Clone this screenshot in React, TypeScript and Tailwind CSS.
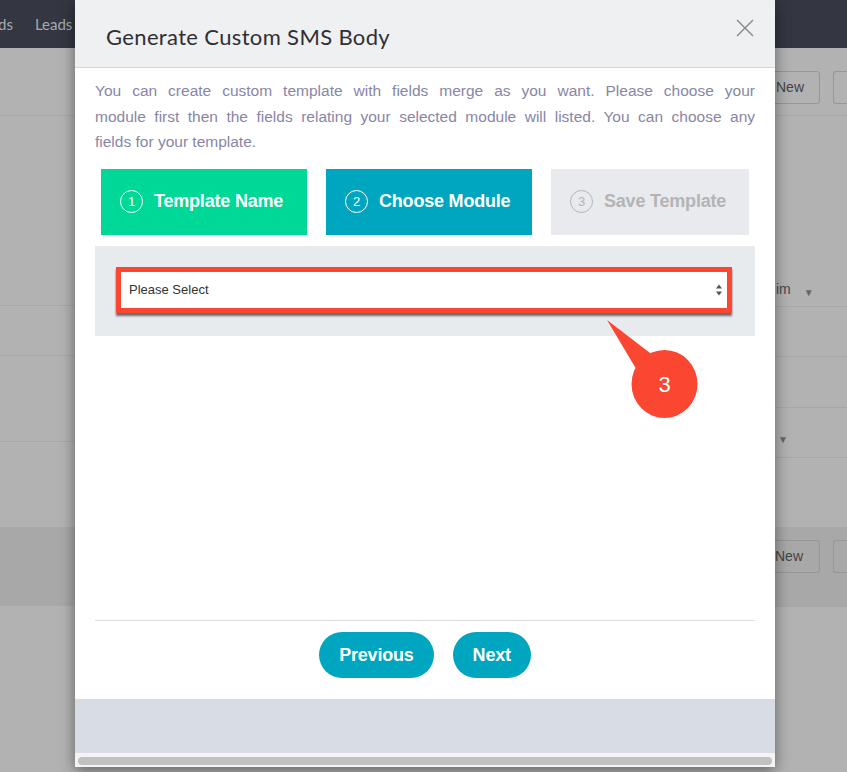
import { useState } from "react";

const steps = [
  { n: 1, label: "Template Name", box: "ml-[6px] w-[206px] bg-[#00d897] text-white", ring: "border-white" },
  { n: 2, label: "Choose Module", box: "ml-[19px] w-[206px] bg-[#00a6c0] text-white", ring: "border-white" },
  { n: 3, label: "Save Template", box: "ml-[19px] w-[198px] bg-[#e8eaed] text-[#b4b4b6]", ring: "border-[#b4b4b6]" },
];

const intro = [
  "You can create custom template with fields merge as you want. Please choose your",
  "module first then the fields relating your selected module will listed. You can choose any",
];

function SelectArrows() {
  return (
    <svg width="8" height="12" viewBox="0 0 8 12" className="shrink-0">
      <path d="M4 0.5 L7 4.5 H1 Z" fill="#555" />
      <path d="M4 11.5 L7 7.5 H1 Z" fill="#555" />
    </svg>
  );
}

function Callout() {
  return (
    <svg
      width="110"
      height="110"
      viewBox="0 0 110 110"
      className="absolute left-[600px] top-[316px] pointer-events-none"
    >
      <path d="M7 4 L38 56 L54 40 Z" fill="#fb4632" />
      <ellipse cx="64.5" cy="68" rx="33" ry="34" fill="#fb4632" />
      <text
        x="64.5"
        y="76"
        textAnchor="middle"
        fontSize="22"
        fontFamily="Liberation Sans, Arial, sans-serif"
        fill="#fff"
      >
        3
      </text>
    </svg>
  );
}

export default function App() {
  const [module, setModule] = useState("");

  return (
    <div className="relative w-[847px] h-[772px] overflow-hidden bg-[#b2b2b2] font-['Liberation_Sans',Arial,sans-serif]">
      {/* Page behind the overlay */}
      <div className="h-[48px] bg-[#343741] flex items-center gap-[22px] text-[15px] text-[#a7a9af] font-['Lato',sans-serif]">
        <span className="-ml-[2px]">ds</span>
        <span>Leads</span>
      </div>
      <div className="h-[68px] border-b border-[#a7a7a7] flex items-start pt-[23px] justify-end gap-[13px]">
        <div className="h-[33px] w-[80px] border border-[#979797] rounded-[3px] flex items-center pl-[35px] text-[14px] text-[#444]">New</div>
        <div className="h-[33px] w-[14px] border border-r-0 border-[#979797] rounded-l-[3px]" />
      </div>
      <div className="flex justify-between">
        <div className="w-[75px] flex flex-col">
          <div className="h-[190px] border-b border-[#a7a7a7]" />
          <div className="h-[50px] border-b border-[#a7a7a7]" />
          <div className="h-[86px] border-b border-[#a7a7a7]" />
          <div className="h-[85px]" />
          <div className="h-[79px] bg-[#a8a8a8]" />
        </div>
        <div className="w-[72px] flex flex-col text-[14px] text-[#4a4a4a]">
          <div className="h-[191px] border-b border-[#a7a7a7] flex items-end pb-[6px]">
            <span className="pl-[1px]">im</span>
            <span className="ml-[13px] text-[10px] text-[#666]">▼</span>
          </div>
          <div className="h-[50px] border-b border-[#a7a7a7]" />
          <div className="h-[51px] border-b border-[#a7a7a7]" />
          <div className="h-[50px] border-b border-[#a7a7a7] flex items-end pb-[10px]">
            <span className="ml-[3px] text-[10px] text-[#666]">▼</span>
          </div>
          <div className="h-[69px]" />
          <div className="h-[80px] bg-[#a8a8a8] flex items-start pt-[13px] gap-[13px]">
            <div className="h-[33px] w-[45px] border border-l-0 border-[#979797] rounded-r-[3px] flex items-center text-[14px] text-[#444]">New</div>
            <div className="h-[33px] w-[14px] border border-r-0 border-[#979797] rounded-l-[3px]" />
          </div>
        </div>
      </div>

      {/* Modal */}
      <div className="absolute left-[75px] top-0 w-[700px] h-[767px] bg-white flex flex-col shadow-[0_4px_14px_rgba(0,0,0,0.45)]">
        <div className="h-[68px] shrink-0 bg-[#eff0f2] border-b border-[#d3d5d9] flex items-center justify-between pl-[31px] pr-[21px]">
          <h2 className="font-['Lato',sans-serif] text-[22px] tracking-[0.35px] text-[#2f2f33] pt-[5px]">Generate Custom SMS Body</h2>
          <button aria-label="Close" className="w-[18px] h-[18px] -mt-[12px]">
            <svg width="18" height="18" viewBox="0 0 18 18" fill="none" stroke="#8a8a8a" strokeWidth="1.4">
              <path d="M1 1 L17 17" />
              <path d="M17 1 L1 17" />
            </svg>
          </button>
        </div>

        <div className="h-[552px] shrink-0 px-[20px] pt-[10px]">
          <div className="text-[15.5px] leading-[25.5px] text-[#8886a6]">
            {intro.map((line) => (
              <p key={line} className="text-justify [text-align-last:justify]">{line}</p>
            ))}
            <p>fields for your template.</p>
          </div>

          <div className="mt-[14px] flex h-[66px]">
            {steps.map((s) => (
              <div key={s.n} className={`${s.box} h-full flex items-center pl-[19px]`}>
                <span className={`w-[23px] h-[23px] rounded-full border-[1.5px] ${s.ring} flex items-center justify-center text-[13px]`}>
                  {s.n}
                </span>
                <span className="ml-[11px] text-[18px] font-bold tracking-[-0.2px]">{s.label}</span>
              </div>
            ))}
          </div>

          <div className="mt-[11px] h-[90px] bg-[#e8ebee] pl-[21px] pr-[23px] pt-[21px]">
            <div className="h-[46px] border-[5px] border-[#fb4631] bg-white shadow-[0_3px_2px_rgba(0,0,0,0.55)] flex items-center justify-between pl-[8px] pr-[4px]">
              <span className="text-[13px] text-[#333]">{module || "Please Select"}</span>
              <select
                value={module}
                onChange={(e) => setModule(e.target.value)}
                className="sr-only"
              >
                <option value="">Please Select</option>
                <option value="Leads">Leads</option>
                <option value="Contacts">Contacts</option>
              </select>
              <SelectArrows />
            </div>
          </div>
        </div>

        <div className="mx-[20px] border-t border-[#dcdcdc] pt-[11px] pb-[21px] flex justify-center gap-[19px]">
          <button className="h-[46px] px-[20px] rounded-full bg-[#00a6c0] text-white text-[18px] font-bold tracking-[-0.2px]">Previous</button>
          <button className="h-[46px] px-[20px] rounded-full bg-[#00a6c0] text-white text-[18px] font-bold tracking-[-0.2px]">Next</button>
        </div>

        <div className="h-[54px] shrink-0 bg-[#d8dce5]" />
        <div className="h-[14px] shrink-0 bg-[#f4f4f4] px-[3px] pt-[4px]">
          <div className="h-[8px] rounded-full bg-[#c1c1c1]" />
        </div>
      </div>

      <Callout />
    </div>
  );
}
